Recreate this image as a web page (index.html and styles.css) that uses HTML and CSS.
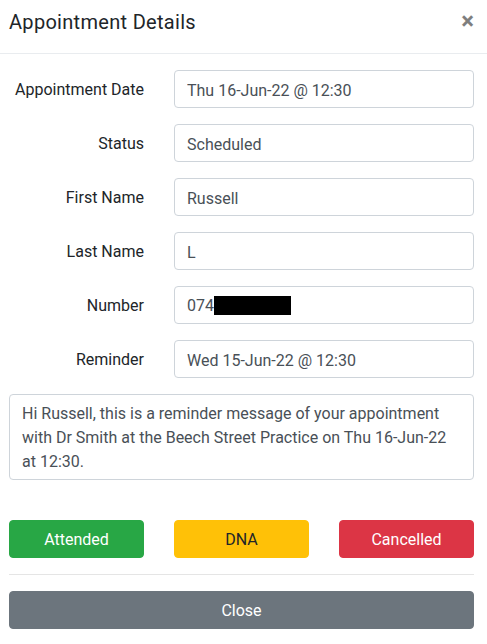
FILE: index.html
```html
<!DOCTYPE html>
<html lang="en">
<head>
<meta charset="utf-8">
<title>Appointment Details</title>
<link rel="stylesheet" href="styles.css">
</head>
<body>
<div class="modal">
  <div class="modal-header">
    <h5 class="modal-title">Appointment Details</h5>
    <button type="button" class="close" aria-label="Close">&times;</button>
  </div>
  <div class="modal-body">
    <form class="form-grid">
      <label class="col-label">Appointment Date</label>
      <input class="form-control" type="text" value="Thu 16-Jun-22 @ 12:30">
      <label class="col-label">Status</label>
      <input class="form-control" type="text" value="Scheduled">
      <label class="col-label">First Name</label>
      <input class="form-control" type="text" value="Russell">
      <label class="col-label">Last Name</label>
      <input class="form-control" type="text" value="L">
      <label class="col-label">Number</label>
      <div class="form-control number-field"><span>074</span><span class="redact"></span></div>
      <label class="col-label">Reminder</label>
      <input class="form-control" type="text" value="Wed 15-Jun-22 @ 12:30">
      <div class="form-control textarea">Hi Russell, this is a reminder message of your appointment with Dr Smith at the Beech Street Practice on Thu 16-Jun-22 at 12:30.</div>
    </form>
    <div class="actions">
      <button type="button" class="btn btn-success">Attended</button>
      <button type="button" class="btn btn-warning">DNA</button>
      <button type="button" class="btn btn-danger">Cancelled</button>
    </div>
    <hr class="divider">
    <button type="button" class="btn btn-secondary btn-block">Close</button>
  </div>
</div>
</body>
</html>
```
FILE: styles.css
```css
* { box-sizing: border-box; }
html, body {
  margin: 0;
  padding: 0;
  background: #fff;
}
body {
  font-family: Roboto, "Noto Sans", sans-serif;
  font-size: 16px;
  line-height: 1.5;
  color: #212529;
  width: 487px;
  overflow: hidden;
}
.modal {
  width: 497px;
  margin-left: -7px;
}
.modal-header {
  display: flex;
  align-items: flex-start;
  justify-content: space-between;
  padding: 10px 16px 19px 16px;
  border-bottom: 1px solid #e9ecef;
}
.modal-title {
  margin: 0;
  font-size: 20px;
  font-weight: 400;
  line-height: 24px;
  letter-spacing: 0.3px;
}
.close {
  background: none;
  border: 0;
  padding: 0;
  margin: -1px 0 0 0;
  font-size: 24px;
  font-weight: 700;
  line-height: 24px;
  color: #000;
  opacity: .5;
  font-family: inherit;
  cursor: pointer;
}
.modal-body {
  padding: 16px;
}
.form-grid {
  display: grid;
  grid-template-columns: 135px 1fr;
  column-gap: 30px;
  row-gap: 16px;
  margin: 0;
}
.col-label {
  text-align: right;
  padding: 8px 0 6px;
  line-height: 24px;
  white-space: nowrap;
}
.form-control {
  display: block;
  width: 100%;
  height: 38px;
  padding: 7px 12px 5px;
  font-family: inherit;
  font-size: 16px;
  line-height: 24px;
  color: #495057;
  background: #fff;
  border: 1px solid #ced4da;
  border-radius: 4px;
  margin: 0;
}
.number-field {
  display: flex;
  align-items: center;
  padding: 6px 12px;
}
.number-field span:first-child {
  padding-top: 1px;
}
.redact {
  display: inline-block;
  width: 77px;
  height: 19px;
  background: #000;
}
.textarea {
  grid-column: 1 / -1;
  height: 86px;
  padding: 7px 12px 5px;
}
.actions {
  display: grid;
  grid-template-columns: 1fr 1fr 1fr;
  column-gap: 30px;
  margin-top: 40px;
}
.btn {
  display: block;
  height: 38px;
  padding: 7px 12px 5px;
  font-family: inherit;
  font-size: 16px;
  line-height: 24px;
  border: 1px solid transparent;
  border-radius: 4px;
  text-align: center;
  cursor: pointer;
}
.btn-success { background: #28a745; border-color: #28a745; color: #fff; }
.btn-warning { background: #ffc107; border-color: #ffc107; color: #212529; }
.btn-danger { background: #dc3545; border-color: #dc3545; color: #fff; }
.btn-secondary { background: #6c757d; border-color: #6c757d; color: #fff; }
.btn-block { width: 100%; }
.divider {
  margin: 16px 0;
  border: 0;
  border-top: 1px solid rgba(0, 0, 0, .1);
}
```
